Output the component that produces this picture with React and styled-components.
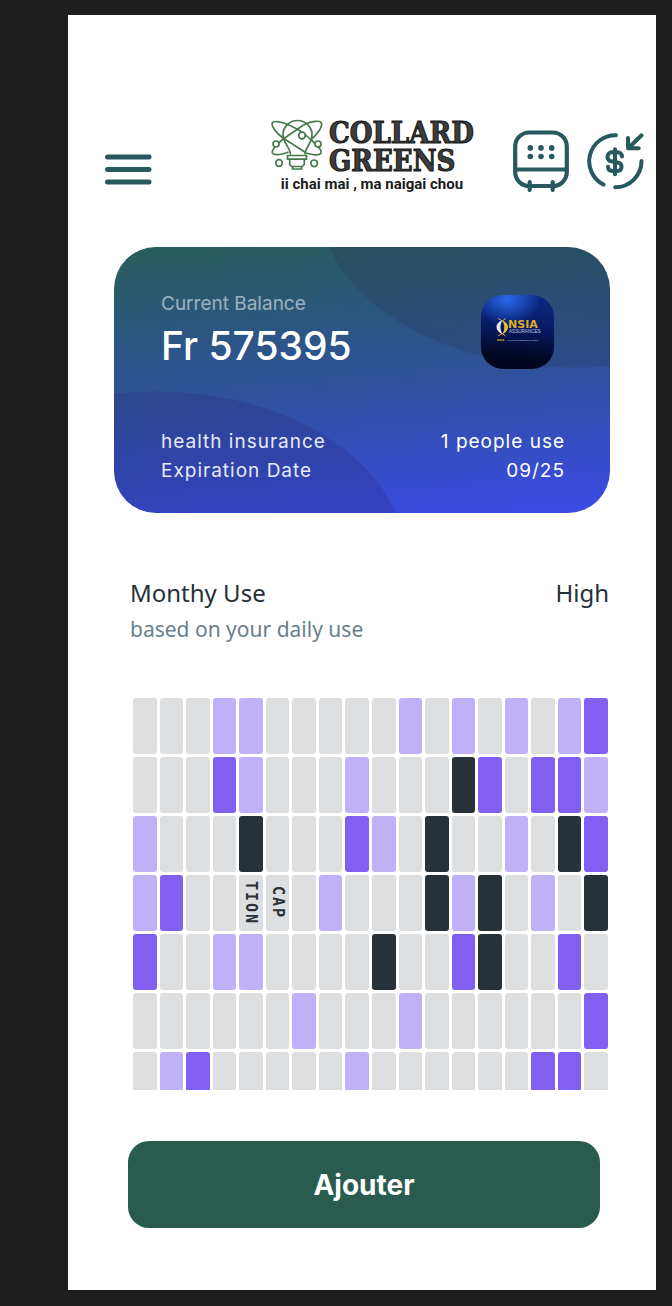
import React from 'react';
import styled, { createGlobalStyle } from 'styled-components';

const GlobalStyle = createGlobalStyle`
  *, *::before, *::after { box-sizing: border-box; }
  body { margin: 0; background: #1e1e1e; }
  h1, h2, p { margin: 0; font-weight: 400; }
`;

const Page = styled.div`
  padding: 15px 16px 16px 68px;
  font-family: Inter, "Liberation Sans", sans-serif;
`;

const Screen = styled.main`
  display: flex;
  flex-direction: column;
  background: #fff;
  padding: 104px 0 62px;
`;

const Header = styled.header`
  display: flex;
  align-items: flex-end;
  padding: 0 12px 0 37px;
`;

const IconButton = styled.button`
  display: block;
  flex: none;
  padding: 0;
  border: 0;
  background: none;
  color: #27595f;
  cursor: pointer;
  svg { display: block; }
`;

const MenuButton = styled(IconButton)`
  padding-bottom: 8px;
`;

const Actions = styled.nav`
  display: flex;
  align-items: flex-end;
  gap: 18px;
  margin-left: 40px;
`;

const Brand = styled.a`
  display: flex;
  flex-direction: column;
  align-items: center;
  margin-left: auto;
  color: #1b1b1b;
  text-decoration: none;
`;

const BrandTop = styled.span`
  display: flex;
  gap: 5px;
`;

const BrandName = styled.span`
  display: flex;
  flex-direction: column;
  width: 144px;
  font: 700 29px/28px "DejaVu Serif Condensed", "DejaVu Serif", serif;
  color: #3c3c3c;
  -webkit-text-stroke: 1px #161616;
`;

const Tagline = styled.span`
  font: 700 15px/18px Roboto, sans-serif;
  white-space: nowrap;
`;

const Card = styled.section`
  display: flex;
  flex-direction: column;
  justify-content: space-between;
  min-height: 266px;
  margin: 54px 46px 0;
  padding: 44px 45px 28px 47px;
  border-radius: 42px;
  color: #fff;
  background:
    radial-gradient(ellipse 251px 168px at 41px 312px, rgba(36, 36, 110, 0.24) 99.5%, transparent 100%),
    radial-gradient(ellipse 257px 168px at calc(100% - 35px) -47px, rgba(36, 50, 80, 0.26) 99.5%, transparent 100%),
    linear-gradient(175deg, #295c5c 2%, #2c5683 32%, #3150a8 60%, #394be0 95%);
`;

const CardRow = styled.div`
  display: flex;
  justify-content: space-between;
`;

const BalanceLabel = styled.p`
  font-size: 19px;
  line-height: 26px;
  color: rgba(255, 255, 255, 0.55);
`;

const Balance = styled.p`
  font-size: 39px;
  line-height: 58px;
  font-weight: 500;
`;

const InsurerBadge = styled.div`
  flex: none;
  width: 73px;
  height: 74px;
  margin: 4px 11px 0 0;
  border-radius: 22px;
  background:
    radial-gradient(ellipse 34px 26px at 36% 6%, #2b68ea, rgba(43, 104, 234, 0)),
    linear-gradient(185deg, #0b2a86 0%, #061a62 45%, #020823 80%, #01051a 100%);
  svg { display: block; }
`;

const Details = styled.div`
  font-size: 19px;
  line-height: 29px;
  letter-spacing: 1px;
  text-align: ${(p) => p.$align || 'left'};
  color: ${(p) => (p.$align === 'right' ? '#fff' : '#e6e9f8')};
  font-weight: ${(p) => (p.$align === 'right' ? 500 : 400)};
`;

const Usage = styled.section`
  display: flex;
  justify-content: space-between;
  padding: 62px 47px 0 62px;
  font-family: "Noto Sans", "Open Sans", sans-serif;
  color: #263038;
`;

const UsageTitle = styled.h2`
  font-size: 24px;
  line-height: 36px;
`;

const UsageNote = styled.p`
  font-size: 21px;
  line-height: 36px;
  color: #68808d;
`;

const HeatMap = styled.section`
  display: grid;
  grid-template-columns: repeat(18, 1fr);
  grid-template-rows: repeat(7, 56px);
  gap: 3px;
  height: 392px;
  margin: 51px 48px 0 65px;
  overflow: hidden;
`;

const tones = { '.': '#dcdedf', l: '#c0b1f7', p: '#815ff0', d: '#283038' };

const Cell = styled.div`
  display: flex;
  align-items: center;
  justify-content: center;
  border-radius: 3px;
  background: ${(p) => tones[p.$tone]};
  font: 700 15px/22px "DejaVu Sans Mono", monospace;
  color: #283038;
  writing-mode: vertical-rl;
  letter-spacing: 2px;
`;

const AddButton = styled.button`
  height: 87px;
  margin: 51px 56px 0 60px;
  border: 0;
  border-radius: 21px;
  background: #295c4f;
  color: #fff;
  font: 700 28px/36px Inter, sans-serif;
  cursor: pointer;
`;

const weeks = [
  '...ll.....l.l.l.lp',
  '...pl...l...dp.ppl',
  'l...d...pl.d..l.dp',
  'lp.....l...dld.l.d',
  'p..ll....d..pd..p.',
  '......l...l......p',
  '.lp.....l......pp.',
];

const labels = { '3-4': 'TION', '3-5': 'CAP' };

const BulbMark = () => (
  <svg width="53" height="52" viewBox="0 0 53 52" fill="none" stroke="#467a49" strokeWidth="1.700" aria-hidden="true">
    <path d="M19.500 35.500C19.500 29 12 24 12 15.500a14.500 14 0 0 1 29 0C41 24 34 29 34 35.500" />
    <path d="M12 19C5 14 0 7 1.200 4 3 1 12 3 19 6.500 27 10 34 15 39 20" />
    <path d="M39 20c6 5 12 11 11 14-1 3-9 2-15 0" />
    <path d="M12 19 34.500 33.500M11.500 20.500 32.500 6" />
    <path d="M32.500 6C40 2 49 1 50.500 4c1 4-4 11-10.500 16.500" />
    <path d="M12 20C5 26 0 31 1.500 34c2 2.500 9 1.500 16-1" />
    <path d="M16.500 36.500h19v3.700h-19zM18.700 40.200v5.300l2 2h10.600l2-2v-5.300M21.500 47.500v2.500h9v-2.500" />
    <g fill="#fff">
      <circle cx="31" cy="16.500" r="3.300" />
      <circle cx="5" cy="25" r="3" />
      <circle cx="47" cy="25" r="3" />
      <circle cx="8" cy="44" r="3.300" />
      <circle cx="43.200" cy="44.300" r="3.300" />
    </g>
  </svg>
);

const MenuIcon = () => (
  <svg width="47" height="32" viewBox="0 0 47 32" stroke="currentColor" strokeWidth="5" strokeLinecap="round" aria-hidden="true">
    <path d="M2.500 4h41.500M2.500 16.500h41.500M2.500 29h41.500" />
  </svg>
);

const PhoneIcon = () => (
  <svg width="56" height="63" viewBox="0 0 56 63" fill="none" stroke="currentColor" strokeWidth="4.200" strokeLinecap="round" aria-hidden="true">
    <rect x="2.200" y="2.500" width="51.600" height="53.500" rx="14" />
    <path d="M3 39.500h50M16.700 52v8M39.700 52v8" />
    <g fill="currentColor" stroke="none">
      {[17.300, 28, 38.700].map((x) => [17.900, 26.500].map((y) => <circle key={`${x}-${y}`} cx={x} cy={y} r="2.800" />))}
    </g>
  </svg>
);

const DollarIcon = () => (
  <svg width="57" height="61" viewBox="0 0 57 61" fill="none" stroke="currentColor" strokeWidth="4" strokeLinecap="round" strokeLinejoin="round" aria-hidden="true">
    <path d="M29 3.300A26 26 0 0 0 16.500 52.500M54.500 29A26.300 26.300 0 0 1 28.200 55.300" />
    <path d="M54.500 3.300 41.300 16.200M41 6v10.300h10.700" />
    <path d="M28 17.300v25" />
    <path d="M35 24.500c0-2.700-2-4.200-4.500-4.200h-5a4.500 4.500 0 0 0-1 9l7 1.300a4.300 4.300 0 0 1-1 8.400h-5c-2.700 0-4.500-1.500-4.500-4.200" />
  </svg>
);

const InsurerLogo = () => (
  <svg width="73" height="74" viewBox="0 0 73 74" role="img" aria-label="NSIA Assurances">
    <path d="M22 25c-4 1.500-6.500 4-6.500 7s2.500 6 6.500 7.500c-2-2.500-2.500-5-2.500-7.500s.5-5 2.500-7z" fill="#e4e4e8" />
    <path d="M21 25.500c4.500 1.500 6 4 6 6.500s-1.500 5.500-6 7.500c1.500-2 2.300-4.500 2.300-7s-.8-5-2.300-7z" fill="#e9bb34" />
    <path d="M17 23.500l4.500 2.500 3-2.500M17 41l4.500-2.500 3 2.500" fill="none" stroke="#d9ae3e" strokeWidth="1" />
    <text x="27" y="33" fontFamily="DejaVu Sans" fontWeight="700" fontSize="11" fill="#dfae2a">NSIA</text>
    <text x="28" y="38" fontFamily="Liberation Sans" fontSize="4.600" fill="#c3c8da">ASSURANCES</text>
    <text x="16" y="46" fontFamily="DejaVu Sans" fontWeight="700" fontSize="2.700" fill="#dfae2a">NSIA</text>
    <text x="25" y="46" fontFamily="Liberation Sans" fontSize="2" fill="#d5d8e2">A un conseil d'assurances et finance</text>
  </svg>
);

export default function App() {
  return (
    <Page>
      <GlobalStyle />
      <Screen>
        <Header>
          <MenuButton type="button" aria-label="Menu"><MenuIcon /></MenuButton>
          <Brand href="#">
            <BrandTop>
              <BulbMark />
              <BrandName><span>COLLARD</span><span>GREENS</span></BrandName>
            </BrandTop>
            <Tagline>ii chai mai , ma naigai chou</Tagline>
          </Brand>
          <Actions>
            <IconButton type="button" aria-label="Phone"><PhoneIcon /></IconButton>
            <IconButton type="button" aria-label="Receive money"><DollarIcon /></IconButton>
          </Actions>
        </Header>

        <Card>
          <CardRow>
            <div>
              <BalanceLabel>Current Balance</BalanceLabel>
              <Balance>Fr 575395</Balance>
            </div>
            <InsurerBadge><InsurerLogo /></InsurerBadge>
          </CardRow>
          <CardRow>
            <Details>
              <p>health insurance</p>
              <p>Expiration Date</p>
            </Details>
            <Details $align="right">
              <p>1 people use</p>
              <p>09/25</p>
            </Details>
          </CardRow>
        </Card>

        <Usage>
          <div>
            <UsageTitle>Monthy Use</UsageTitle>
            <UsageNote>based on your daily use</UsageNote>
          </div>
          <UsageTitle as="p">High</UsageTitle>
        </Usage>

        <HeatMap>
          {weeks.map((week, r) =>
            [...week].map((tone, c) => (
              <Cell key={`${r}-${c}`} $tone={tone}>{labels[`${r}-${c}`]}</Cell>
            ))
          )}
        </HeatMap>

        <AddButton type="button">Ajouter</AddButton>
      </Screen>
    </Page>
  );
}
